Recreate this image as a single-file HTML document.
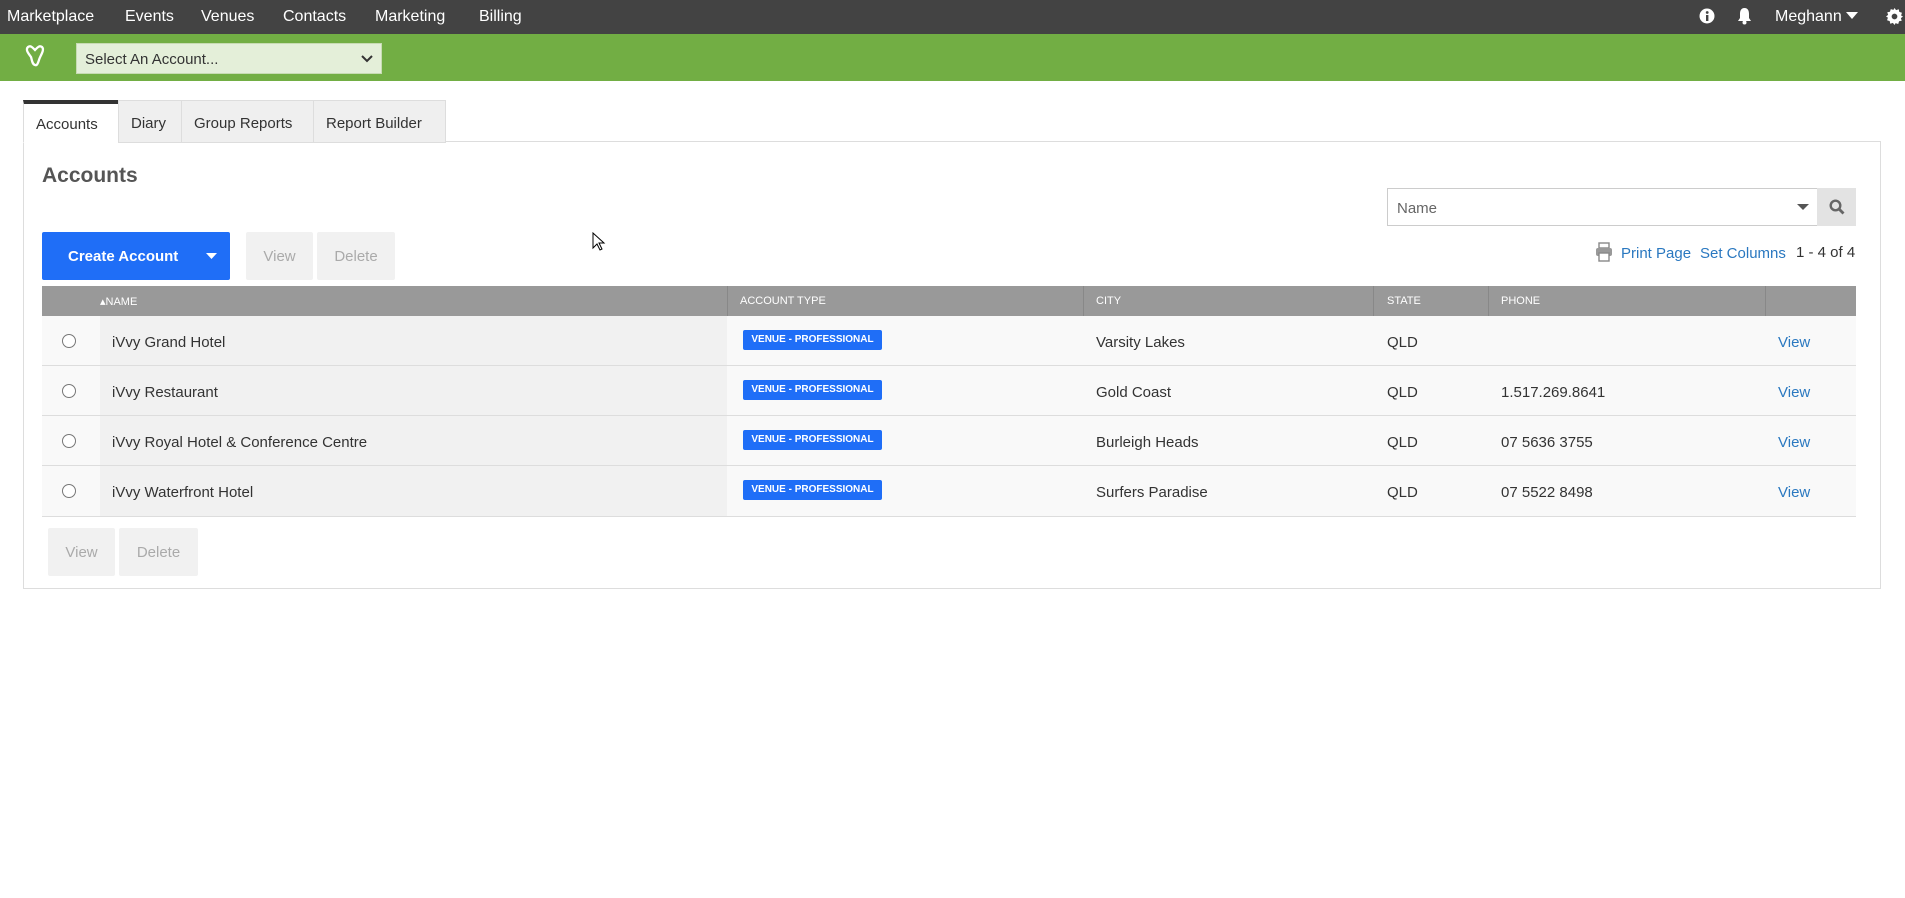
<!DOCTYPE html>
<html><head><meta charset="utf-8"><style>
*{box-sizing:border-box;margin:0;padding:0}
body{width:1905px;height:898px;background:#fff;font-family:"Liberation Sans",sans-serif;color:#333;position:relative;overflow:hidden}
.a{position:absolute}
.nav{left:0;top:0;width:1905px;height:34px;background:#434343;color:#fff;font-size:16px}
.nav span{position:absolute;top:8px}
.green{left:0;top:34px;width:1905px;height:47px;background:#72ae44}
.sel{left:76px;top:43px;width:306px;height:31px;background:#e4efd9;border:1px solid #c7dbb3;font-size:15px;color:#333;padding:7px 8px}
.tab{top:100px;height:43px;border:1px solid #ddd;background:#efefef;font-size:15px;padding:14px 12px;color:#333}
.panel{left:23px;top:141px;width:1858px;height:448px;border:1px solid #ddd}
.btn{background:#f1f1f1;color:#aaa;font-size:15px;text-align:center;border-radius:2px}
.th{top:286px;height:30px;background:#999;color:#fff;font-size:11px}
.th span{position:absolute;top:9px}
.row{left:42px;width:1814px;height:50px;background:#f9f9f9;border-bottom:1px solid #ddd;font-size:15px}
.row .nm{position:absolute;left:58px;top:0;width:627px;height:49px;background:#f1f1f1}
.row span{position:absolute;top:18px}
.badge{position:absolute;left:701px;top:14px;width:139px;height:20px;background:#1f6ef7;color:#fff;font-size:10px;font-weight:bold;border-radius:2px;text-align:center;line-height:20px}
.radio{position:absolute;left:20px;top:18px;width:14px;height:14px;border:1px solid #777;border-radius:50%;background:#fff}
.lnk{color:#2a78c0}
</style></head><body>
<div class="a nav"><span style="left:7px">Marketplace</span><span style="left:125px">Events</span><span style="left:201px">Venues</span><span style="left:283px">Contacts</span><span style="left:375px">Marketing</span><span style="left:479px">Billing</span>
<svg style="position:absolute;left:1699px;top:8px" width="16" height="16"><circle cx="8" cy="8" r="7.5" fill="#fff"/><rect x="7" y="7" width="2.4" height="6" fill="#434343"/><circle cx="8.2" cy="4.5" r="1.4" fill="#434343"/></svg>
<svg style="position:absolute;left:1736px;top:7px" width="17" height="18"><path d="M8.5 1C5 1 4 4 4 7v4l-2 3h13l-2-3V7c0-3-1-6-4.5-6z" fill="#fff"/><circle cx="8.5" cy="15.5" r="2" fill="#fff"/></svg>
<span style="left:1775px">Meghann</span>
<svg style="position:absolute;left:1846px;top:12px" width="12" height="8"><path d="M0 0h12L6 7z" fill="#fff"/></svg>
<svg style="position:absolute;left:1886px;top:8px" width="17" height="17" viewBox="0 0 16 16"><path d="M8 0l1.5 2 2.5-.8.5 2.5 2.5.8-.8 2.5L16 8l-2 1.5.8 2.5-2.5.5-.8 2.5-2.5-.8L8 16l-1.5-2-2.5.8-.5-2.5-2.5-.8.8-2.5L0 8l2-1.5-.8-2.5 2.5-.5.8-2.5 2.5.8z" fill="#fff"/><circle cx="8" cy="8" r="2.7" fill="#434343"/></svg>
</div>
<div class="a green"><svg style="position:absolute;left:24px;top:10px" width="22" height="24" viewBox="0 0 22 24"><path d="M4 3c3-2 5 1 7 3 2-2 4-5 7-3 3 3-2 9-3 13-1 3-2 6-4 5-3-1-3-5-4-8C5 10 1 6 4 3z" fill="none" stroke="#fff" stroke-width="2.3"/></svg></div>
<div class="a sel">Select An Account...<svg style="position:absolute;right:8px;top:11px" width="12" height="8"><path d="M1 1l5 5 5-5" fill="none" stroke="#333" stroke-width="2"/></svg></div>
<div class="a panel"></div>
<div class="a tab" style="left:23px;width:96px;background:#fff;border-bottom-color:#fff;border-top:4px solid #333;padding-top:12px">Accounts</div>
<div class="a tab" style="left:118px;width:64px">Diary</div>
<div class="a tab" style="left:181px;width:133px">Group Reports</div>
<div class="a tab" style="left:313px;width:133px">Report Builder</div>
<div class="a" style="left:42px;top:164px;font-size:21px;font-weight:bold;color:#555">Accounts</div>
<div class="a" style="left:42px;top:232px;width:188px;height:48px;background:#1f6ef7;color:#fff;font-weight:bold;font-size:15px;border-radius:2px;padding:16px 0 0 26px">Create Account<svg style="position:absolute;left:164px;top:21px" width="11" height="7"><path d="M0 0h11L5.5 6z" fill="#fff"/></svg></div>
<div class="a btn" style="left:246px;top:232px;width:67px;height:48px;padding-top:16px">View</div>
<div class="a btn" style="left:317px;top:232px;width:78px;height:48px;padding-top:16px">Delete</div>
<svg class="a" style="left:592px;top:232px" width="14" height="20"><path d="M1 1v15l4-4 3 6 2-1-3-6h5z" fill="#fff" stroke="#000"/></svg>
<div class="a" style="left:1387px;top:188px;width:431px;height:38px;border:1px solid #ccc;font-size:15px;color:#666;padding:11px 9px">Name<svg style="position:absolute;right:8px;top:15px" width="12" height="7"><path d="M0 0h12L6 6z" fill="#555"/></svg></div>
<div class="a" style="left:1817px;top:188px;width:39px;height:38px;background:#e3e3e3"><svg style="position:absolute;left:12px;top:11px" width="16" height="16"><circle cx="6.5" cy="6.5" r="4.8" fill="none" stroke="#666" stroke-width="2.4"/><path d="M10 10l4.5 4.5" stroke="#666" stroke-width="2.8"/></svg></div>
<svg class="a" style="left:1595px;top:242px" width="18" height="20"><rect x="4" y="1" width="10" height="5" fill="none" stroke="#888" stroke-width="1.4"/><rect x="1" y="6" width="16" height="8" rx="2" fill="#999"/><rect x="4" y="11" width="10" height="8" fill="#fff" stroke="#888" stroke-width="1.4"/></svg>
<div class="a lnk" style="left:1621px;top:245px;font-size:15px">Print Page</div>
<div class="a lnk" style="left:1700px;top:245px;font-size:15px">Set Columns</div>
<div class="a" style="left:1796px;top:244px;font-size:15px">1 - 4 of 4</div>
<div class="a th" style="left:42px;width:1814px"><span style="left:58px">&#9652;NAME</span><span style="left:698px">ACCOUNT TYPE</span><span style="left:1054px">CITY</span><span style="left:1345px">STATE</span><span style="left:1459px">PHONE</span>
<div style="position:absolute;left:685px;top:0;width:1px;height:30px;background:#888"></div><div style="position:absolute;left:1041px;top:0;width:1px;height:30px;background:#888"></div><div style="position:absolute;left:1331px;top:0;width:1px;height:30px;background:#888"></div><div style="position:absolute;left:1446px;top:0;width:1px;height:30px;background:#888"></div><div style="position:absolute;left:1723px;top:0;width:1px;height:30px;background:#888"></div></div>
<div class="a row" style="top:316px"><div class="nm"></div><div class="radio"></div><span style="left:70px">iVvy Grand Hotel</span><div class="badge">VENUE - PROFESSIONAL</div><span style="left:1054px">Varsity Lakes</span><span style="left:1345px">QLD</span><span class="lnk" style="left:1736px">View</span></div>
<div class="a row" style="top:366px"><div class="nm"></div><div class="radio"></div><span style="left:70px">iVvy Restaurant</span><div class="badge">VENUE - PROFESSIONAL</div><span style="left:1054px">Gold Coast</span><span style="left:1345px">QLD</span><span style="left:1459px">1.517.269.8641</span><span class="lnk" style="left:1736px">View</span></div>
<div class="a row" style="top:416px"><div class="nm"></div><div class="radio"></div><span style="left:70px">iVvy Royal Hotel &amp; Conference Centre</span><div class="badge">VENUE - PROFESSIONAL</div><span style="left:1054px">Burleigh Heads</span><span style="left:1345px">QLD</span><span style="left:1459px">07 5636 3755</span><span class="lnk" style="left:1736px">View</span></div>
<div class="a row" style="top:466px;height:51px"><div class="nm" style="height:50px"></div><div class="radio"></div><span style="left:70px">iVvy Waterfront Hotel</span><div class="badge">VENUE - PROFESSIONAL</div><span style="left:1054px">Surfers Paradise</span><span style="left:1345px">QLD</span><span style="left:1459px">07 5522 8498</span><span class="lnk" style="left:1736px">View</span></div>
<div class="a btn" style="left:48px;top:528px;width:67px;height:48px;padding-top:16px">View</div>
<div class="a btn" style="left:119px;top:528px;width:79px;height:48px;padding-top:16px">Delete</div>
</body></html>
